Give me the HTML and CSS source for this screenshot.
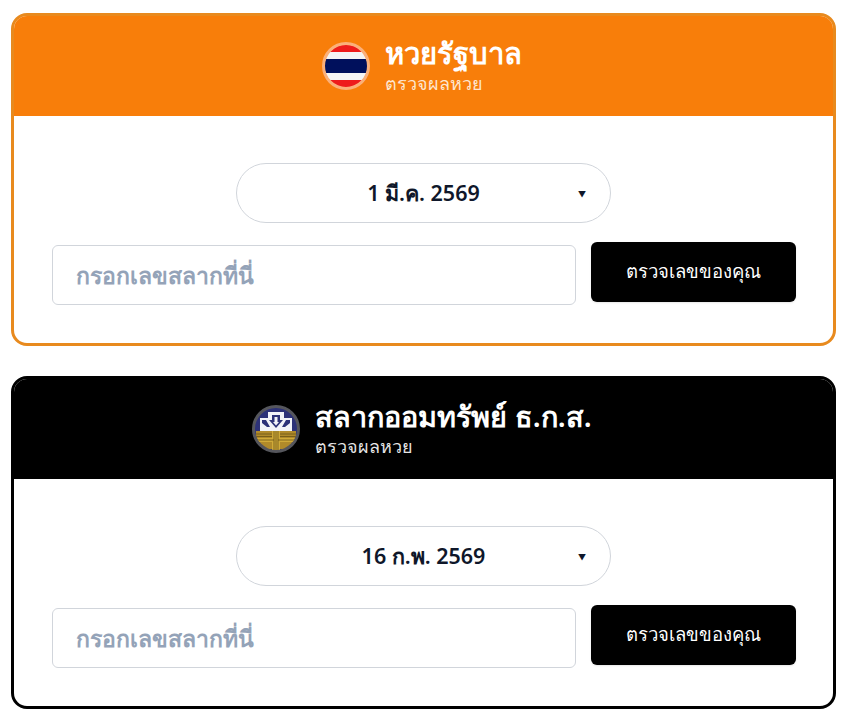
FILE: index.html
```html
<!DOCTYPE html>
<html lang="th">
<head>
<meta charset="utf-8">
<title>ตรวจผลหวย</title>
<link rel="stylesheet" href="styles.css">
</head>
<body>
<main class="page">
  <section class="card card-gov">
    <header class="head head-gov">
      <svg class="logo" viewBox="0 0 48 48" aria-hidden="true">
        <defs><clipPath id="c1"><circle cx="24" cy="24" r="21.5"/></clipPath></defs>
        <g clip-path="url(#c1)">
          <rect width="48" height="48" fill="#f5f5f5"/>
          <rect y="0" width="48" height="10" fill="#ee1c1c"/>
          <rect y="38" width="48" height="10" fill="#ee1c1c"/>
          <rect y="17" width="48" height="14" fill="#00105c"/>
        </g>
        <circle cx="24" cy="24" r="22.5" fill="none" stroke="#fbb07a" stroke-width="3"/>
      </svg>
      <div class="titles">
        <h2 class="title">หวยรัฐบาล</h2>
        <p class="sub">ตรวจผลหวย</p>
      </div>
    </header>
    <div class="body">
      <div class="select"><span class="select-text">1 มี.ค. 2569</span><span class="caret">▼</span></div>
      <div class="row">
        <div class="input">กรอกเลขสลากที่นี่</div>
        <button class="btn">ตรวจเลขของคุณ</button>
      </div>
    </div>
  </section>
  <section class="card card-gsb">
    <header class="head head-gsb">
      <svg class="logo" viewBox="0 0 48 48" aria-hidden="true">
        <defs><clipPath id="c2"><circle cx="24" cy="24" r="21"/></clipPath></defs>
        <circle cx="24" cy="24" r="22.5" fill="#2d3278" stroke="#55565c" stroke-width="3"/>
        <path d="M16 7h16v6h8v13H8V13h8z" fill="#f2f3f8"/>
        <path d="M20 10h8v5l3 0-7 8-7-8 3 0z" fill="#2d3278"/>
        <path d="M22.500 12h3v5h1.500l-3 3.500-3-3.500h1.500z" fill="#f2f3f8"/>
        <path d="M10 15h4l4 7h-3l-5-4zM38 15h-4l-4 7h3l5-4z" fill="#2d3278"/>
        <g clip-path="url(#c2)">
          <rect x="4" y="26" width="40" height="18" fill="#b08a2a"/>
          <path d="M20 26h8v7h16v4H28v8h-8v-8H4v-4h16z" fill="#d0aa38"/>
          <path d="M22 26v20M24 26v20M26 26v20M4 29h16M28 29h16M4 31.500h16M28 31.500h16M4 35h18M26 35h18" stroke="#5e4a14" stroke-width=".7" fill="none"/>
        </g>
      </svg>
      <div class="titles">
        <h2 class="title">สลากออมทรัพย์ ธ.ก.ส.</h2>
        <p class="sub">ตรวจผลหวย</p>
      </div>
    </header>
    <div class="body">
      <div class="select"><span class="select-text">16 ก.พ. 2569</span><span class="caret">▼</span></div>
      <div class="row">
        <div class="input">กรอกเลขสลากที่นี่</div>
        <button class="btn">ตรวจเลขของคุณ</button>
      </div>
    </div>
  </section>
</main>
</body>
</html>
```
FILE: styles.css
```css
* { box-sizing: border-box; }
html, body { margin: 0; padding: 0; background: #fff; }
body { font-family: "Noto Sans", "Noto Sans CJK SC", sans-serif; }
.page { padding: 13px 6px 8px 11px; display: flex; flex-direction: column; gap: 30px; }
.card { height: 333px; border: 3px solid; border-radius: 16px; overflow: hidden; background: #fff; }
.card-gov { border-color: #e88a1e; }
.card-gsb { border-color: #000; }
.head { height: 100px; display: flex; align-items: center; justify-content: center; gap: 15px; padding-right: 3px; color: #fff; }
.head-gov { background: #f87e0a; margin: -3px -3px 0; height: 103px; padding-top: 3px; }
.head-gsb { background: #000; }
.logo { width: 48px; height: 48px; flex: none; }
.titles { display: flex; flex-direction: column; padding-bottom: 2px; }
.title { margin: 0; font-size: 29.200px; line-height: 36px; font-weight: 600; }
.head-gsb .title { font-size: 28.800px; }
.sub { margin: 0; font-size: 18px; line-height: 24px; font-weight: 300; color: #fde6d0; }
.head-gsb .sub { color: #e5e5e5; }
.body { padding: 47px 37px 0 38px; display: flex; flex-direction: column; align-items: center; }
.select { width: 375px; height: 60px; margin-right: 1px; border: 1px solid #d1d5db; border-radius: 30px; display: flex; align-items: center; justify-content: center; position: relative; color: #0f172a; font-size: 21.500px; font-weight: 600; }
.caret { position: absolute; left: 341px; top: 24px; font-size: 8px; line-height: 12px; }
.row { width: 100%; margin-top: 19px; display: flex; align-items: flex-start; gap: 15px; }
.input { width: 524px; height: 60px; margin-top: 3px; border: 1px solid #d1d5db; border-radius: 6px; padding: 2px 0 0 23px; display: flex; align-items: center; font-size: 23px; font-weight: 600; color: #94a3b8; }
.btn { width: 205px; height: 60px; border: 0; border-radius: 6px; padding: 0 0 2px; background: #000; color: #fff; font-family: inherit; font-size: 18.500px; font-weight: 500; box-shadow: 0 1px 2px rgba(0,0,0,.1); }
```
